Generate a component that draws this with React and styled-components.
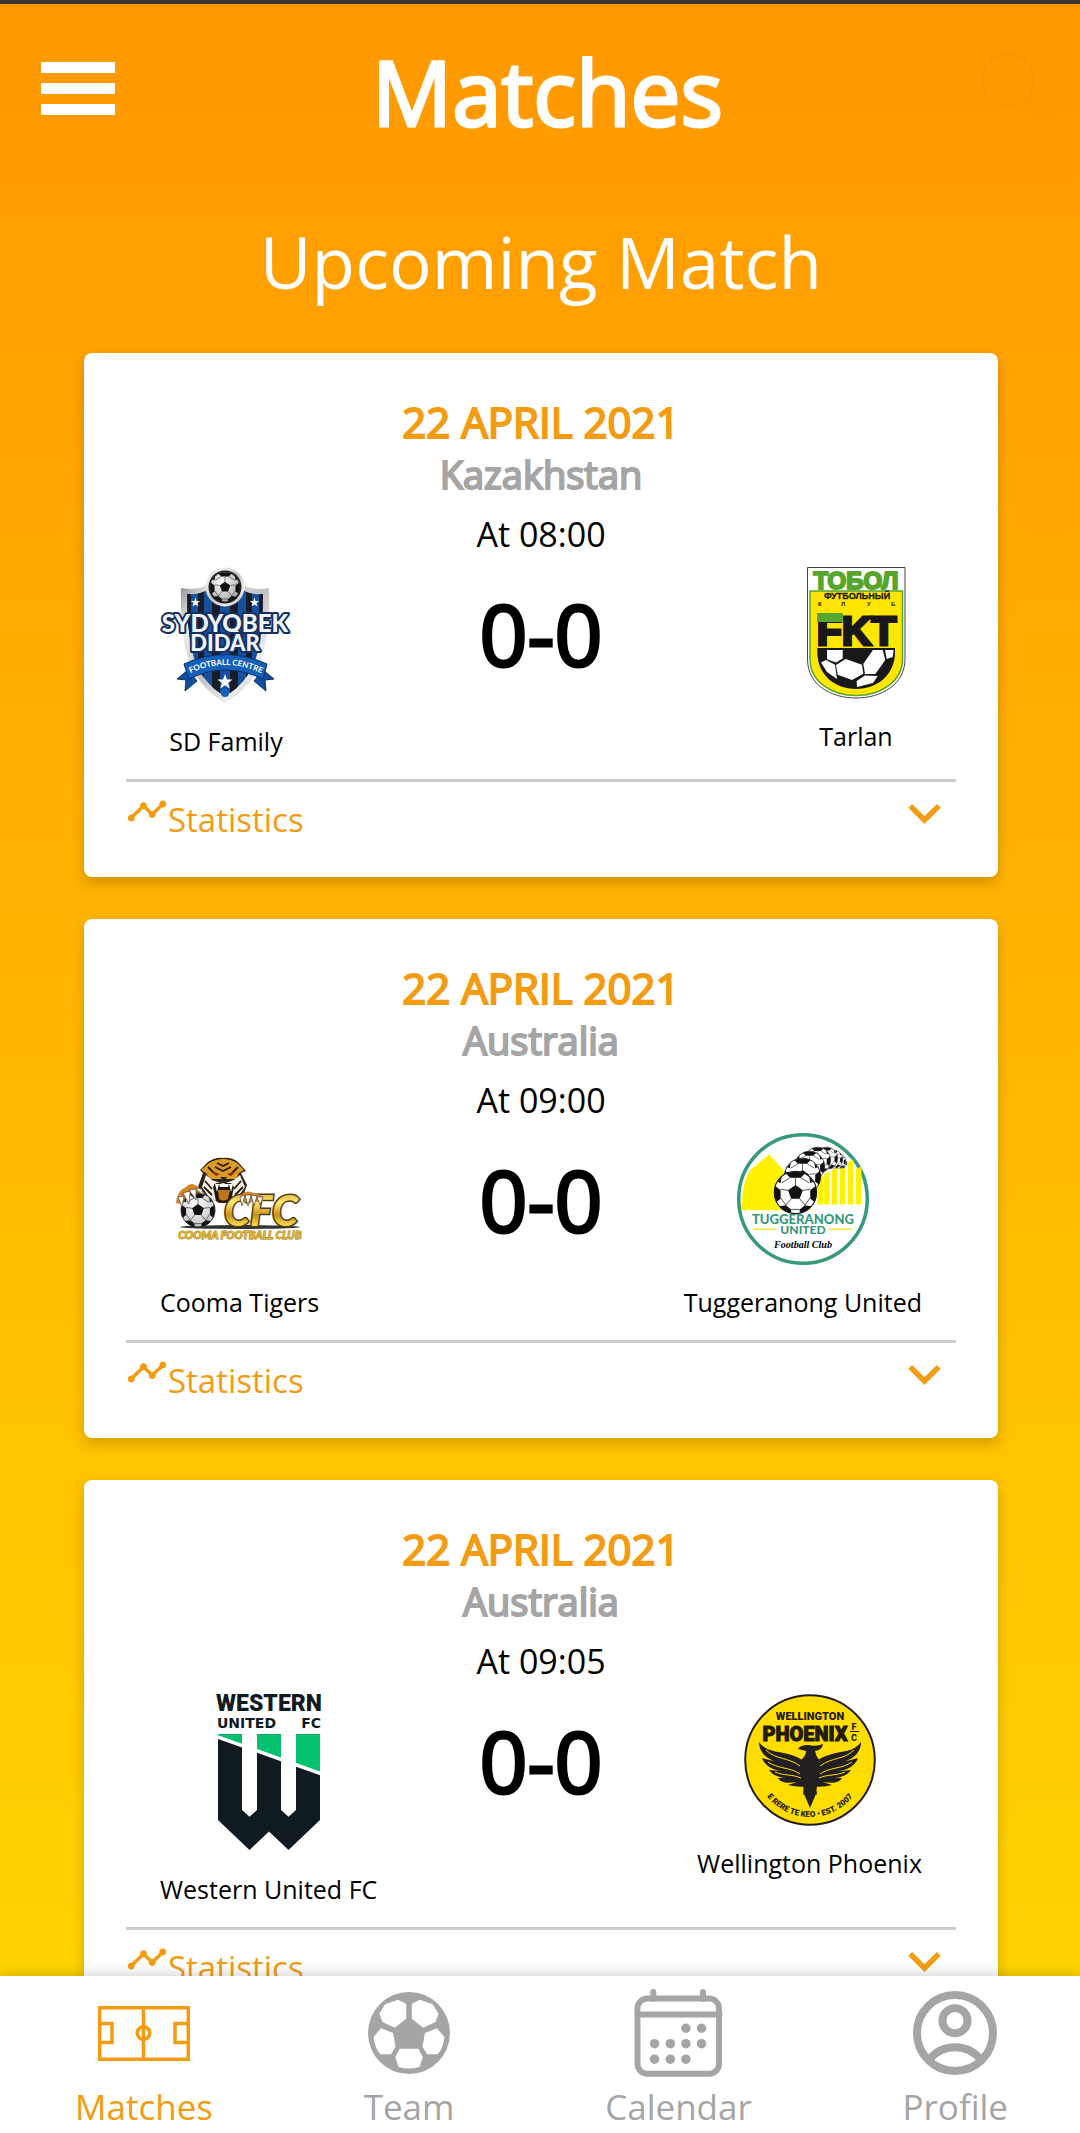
import React from "react";
import styled, { createGlobalStyle } from "styled-components";

const ORANGE = "#f39c12";
const GREY = "#a5a5a5";

const GlobalStyle = createGlobalStyle`
  * { box-sizing: border-box; }
  body { margin: 0; font-family: "Open Sans", "Noto Sans", sans-serif; color: #000; }
  h1, h2, h3, p { margin: 0; font-weight: 400; }
  svg { display: block; flex: none; overflow: visible; }
`;

const Screen = styled.div`
  display: flex;
  flex-direction: column;
  height: 100vh;
  background: linear-gradient(#ff9800, #ffd800);
  border-top: 4px solid #383431;
`;

const Scroll = styled.main`
  flex: 1;
  min-height: 0;
  overflow-y: auto;
  scrollbar-width: none;
`;

const Header = styled.header`
  display: flex;
  justify-content: space-between;
  align-items: flex-start;
  padding: 28px 26px 0 41px;
`;

const IconButton = styled.button`
  border: 0;
  padding: 0;
  background: none;
  cursor: pointer;
  margin-top: ${(p) => p.$top}px;
`;

const Title = styled.h1`
  font-size: 89px;
  line-height: 120px;
  color: #fff;
  -webkit-text-stroke: 3px #fff;
`;

const Content = styled.div`
  padding: 61px 82px 42px 84px;
  display: flex;
  flex-direction: column;
  gap: 42px;
`;

const SectionTitle = styled.h2`
  font-size: 71px;
  line-height: 98px;
  color: #fff;
  text-align: center;
`;

const Card = styled.article`
  background: #fff;
  border-radius: 8px;
  padding: 42px 42px 28px;
  box-shadow: 0 6px 14px rgba(0, 0, 0, 0.18);
`;

const MatchDate = styled.h3`
  font-size: 42px;
  line-height: 54px;
  text-align: center;
  color: ${ORANGE};
  -webkit-text-stroke: 2px ${ORANGE};
`;

const Country = styled.p`
  font-size: 38px;
  line-height: 50px;
  text-align: center;
  color: ${GREY};
  -webkit-text-stroke: 2px ${GREY};
`;

const Kickoff = styled.p`
  padding-top: 2px;
  font-size: 34px;
  line-height: 66px;
  text-align: center;
`;

const Teams = styled.div`
  display: grid;
  grid-template-columns: 1fr auto 1fr;
  align-items: start;
  padding: 0 34px 21px;
  border-bottom: 3px solid #cbcbcb;
`;

const Team = styled.div`
  justify-self: ${(p) => p.$side};
  display: flex;
  flex-direction: column;
  align-items: center;
  gap: 20px;
`;

const TeamName = styled.span`
  font-size: 25px;
  line-height: 34px;
  white-space: nowrap;
`;

const Score = styled.p`
  font-size: 84px;
  line-height: 134px;
  -webkit-text-stroke: 3px #000;
`;

const StatsButton = styled.button`
  display: flex;
  align-items: flex-start;
  width: 100%;
  border: 0;
  background: none;
  padding: 8px 15px 0 0;
  font: inherit;
  color: ${ORANGE};
  cursor: pointer;
`;

const StatsLabel = styled.span`
  flex: 1;
  text-align: left;
  font-size: 33px;
  line-height: 59px;
`;

const Chevron = styled.svg`
  margin-top: 14px;
`;

const TabBar = styled.nav`
  position: relative;
  display: flex;
  justify-content: space-between;
  background: #fff;
  padding: 13px 72px 2px 75px;
  box-shadow: 0 0 14px rgba(0, 0, 0, 0.22);
`;

const Tab = styled.a`
  display: flex;
  flex-direction: column;
  align-items: center;
  gap: 5px;
  font-size: 35px;
  line-height: 49px;
  text-decoration: none;
  color: ${(p) => (p.$active ? ORANGE : GREY)};
`;

const TabIcon = styled.span`
  display: flex;
  align-items: center;
  height: 88px;
`;

/* ---------- club crests ---------- */

const star = (cx, cy, r) =>
  Array.from({ length: 10 }, (_, i) => {
    const a = -Math.PI / 2 + (i * Math.PI) / 5;
    const d = i % 2 ? r * 0.4 : r;
    return `${cx + d * Math.cos(a)},${cy + d * Math.sin(a)}`;
  }).join(" ");

function Ball({ x, y, r, fill = "#fff" }) {
  return (
    <g transform={`translate(${x} ${y}) scale(${r / 20})`}>
      <circle r="20" fill={fill} stroke="#111" strokeWidth="1" />
      <path d="M0-7 7-2 4 6H-4L-7-2Z M-9-18Q0-21 9-18L5-14H-5Z M19-6Q21 2 18 9L14 6 14-2Z M-19-6Q-21 2-18 9L-14 6-14-2Z M4 19.500Q12 18 15 13L9 12 4 16Z M-4 19.500Q-12 18-15 13L-9 12-4 16Z M13-15 17-10 14-9Z M-13-15-17-10-14-9Z" fill="#111" />
      <path d="M0-7V-14M7-2 14-3M4 6 9 12M-4 6-9 12M-7-2-14-3M5-14 13-9M-5-14-13-9M14 5 9 12M-14 5-9 12M4 16H-4" stroke="#333" strokeWidth=".8" fill="none" />
    </g>
  );
}

function SydyqbekCrest() {
  return (
    <svg width="132" height="137" viewBox="0 0 132 137" role="img" aria-label="Sydyqbek Didar crest">
      <defs>
        <linearGradient id="sdSilver" x1="0" y1="0" x2="1" y2="1">
          <stop offset="0" stopColor="#8a8a8a" />
          <stop offset=".2" stopColor="#f1f1f1" />
          <stop offset=".5" stopColor="#c2c2c2" />
          <stop offset=".75" stopColor="#eee" />
          <stop offset="1" stopColor="#999" />
        </linearGradient>
        <radialGradient id="sdBall" cx=".4" cy=".35" r=".7">
          <stop offset="0" stopColor="#fff" />
          <stop offset="1" stopColor="#a5a5a5" />
        </radialGradient>
        <clipPath id="sdInner">
          <path d="M27 27Q42 28 48 22H82Q88 28 103 27Q103 60 98 84C93 104 82 120 65 129C48 120 37 104 32 84Q27 60 27 27Z" />
        </clipPath>
        <path id="sdArc" d="M29 107Q65 89 103 107" />
      </defs>
      <path d="M21 21Q38 24 48 17H82Q92 24 109 21Q110 60 104 84C98 108 84 125 65 136C46 125 32 108 26 84Q20 60 21 21Z" fill="url(#sdSilver)" />
      <g clipPath="url(#sdInner)">
        <rect x="20" y="15" width="92" height="120" fill="#17509f" />
        <path d="M38 15h6v120h-6zM52 15h8v120h-8zM70 15h8v120h-8zM86 15h6v120h-6zM99 15h6v120h-6zM27 15h4v120h-4z" fill="#171c26" />
      </g>
      <polygon points={star(35.500, 35.500, 5)} fill="#fff" />
      <polygon points={star(94.500, 35.500, 5)} fill="#fff" />
      <circle cx="65" cy="20" r="19.500" fill="url(#sdSilver)" />
      <circle cx="65" cy="20" r="16.500" fill="#222" />
      <Ball x={65} y={20} r={15} fill="url(#sdBall)" />
      <g fontFamily="Lato, sans-serif" fontWeight="900" textAnchor="middle" fill="#f2f5fb" stroke="#15305e" strokeWidth="4" strokeLinejoin="round" paintOrder="stroke">
        <text x="65" y="65" fontSize="24">SYDYQBEK</text>
        <text x="65" y="84" fontSize="22">DIDAR</text>
      </g>
      <path d="M28 103 17 112 26 113 25 124 37 114ZM103 103 114 112 105 113 106 124 94 114Z" fill="#0f4f9e" stroke="#0b2f63" />
      <path d="M24 97Q65 78 107 97L103 112Q65 94 29 112Z" fill="#1560bd" stroke="#0b2f63" />
      <text fontFamily="Lato, sans-serif" fontWeight="700" fontSize="8" fill="#fff">
        <textPath href="#sdArc" startOffset="50%" textAnchor="middle">FOOTBALL CENTRE</textPath>
      </text>
      <polygon points={star(65, 115, 8)} fill="#fff" />
      <circle cx="65" cy="126" r="4" fill="#1560bd" />
    </svg>
  );
}

function TobolCrest() {
  return (
    <svg width="132" height="132" viewBox="-17 0 132 132" role="img" aria-label="Tobol crest">
      <path d="M.5.5H98V92C98 118 74 131 49 131S.5 118 .5 92Z" fill="#fff" stroke="#444" />
      <path d="M3 24H95.500V92C95.500 115 73 128.500 49 128.500S3 115 3 92Z" fill="#ffe600" stroke="#56a52c" strokeWidth="1.500" />
      <g fontFamily="Liberation Sans, sans-serif" fontWeight="700" fill="#1a1718">
        <text x="49" y="22" fontSize="24" textAnchor="middle" fill="#56a52c" stroke="#56a52c" strokeWidth="2">ТОБОЛ</text>
        <text x="50" y="32" fontSize="9" textAnchor="middle" stroke="#1a1718" strokeWidth=".3">ФУТБОЛЬНЫЙ</text>
        <text x="11" y="39" fontSize="6">К</text>
        <text x="34" y="39" fontSize="6">Л</text>
        <text x="60" y="39" fontSize="6">У</text>
        <text x="84" y="39" fontSize="6">Б</text>
        <text x="49.500" y="78" fontSize="41" textAnchor="middle" stroke="#1a1718" strokeWidth="3">FKT</text>
      </g>
      <rect x="10" y="46" width="26" height="9" fill="#56a52c" />
      <path d="M10.300 81H88V85C88 108 70 122 49 122S10.300 108 10.300 85Z" fill="#1a1718" />
      <path d="M20 83H35.700V91.600L29 95.400 20 92.300ZM38.700 92 55 97.800 56.300 106.700 45 113 30.700 107.800 29 98ZM66 83H75.700L78.300 93 68.300 107H58L56.300 96.800ZM78 83H86.700L85.700 90 79.700 92ZM14 95.400 19 93 28 97.800 30 112 20 105ZM49.700 114 58 108.500 70.700 109 66 116 50 120Z" fill="#fff" />
    </svg>
  );
}

function CoomaCrest() {
  return (
    <svg width="132" height="132" viewBox="0 0 132 132" role="img" aria-label="Cooma Football Club crest">
      <defs>
        <linearGradient id="gold" x1="0" y1="0" x2="0" y2="1">
          <stop offset="0" stopColor="#b98a1c" />
          <stop offset=".35" stopColor="#ffe873" />
          <stop offset=".6" stopColor="#c6921c" />
          <stop offset=".8" stopColor="#f7d84c" />
          <stop offset="1" stopColor="#8a6412" />
        </linearGradient>
        <radialGradient id="cBall" cx=".45" cy=".35" r=".7">
          <stop offset="0" stopColor="#fff" />
          <stop offset="1" stopColor="#bbb" />
        </radialGradient>
      </defs>
      <ellipse cx="66" cy="94" rx="60" ry="2" fill="#333" />
      <path d="M26 37 34 29Q42 24 49 25Q57 24 64 29L72 38 67 40 73 52 68 66 56 70 45 70 32 62 24 54 29 40Z" fill="#2c2414" />
      <path d="M27 37 35 30Q42 26 49 26Q57 26 63 30L70 37 65 40 62 46H36L32 40Z" fill="#dc9a26" />
      <path d="M32 42 28 54 35 64 42 68 39 54 42 50H57L60 54 57 68 64 64 71 54 66 42 60 47 49 51 38 47Z" fill="#f6f2e8" />
      <path d="M43 30 49 33 55 30M41 34 49 38 57 34M34 34 40 40M64 34 58 40M31 48 38 56M67 48 60 56M30 54 38 62M69 54 61 62" fill="none" stroke="#2a1c0b" strokeWidth="1.800" />
      <path d="M37 38 46 41 42 43ZM62 38 53 41 57 43Z" fill="#8a2c12" />
      <path d="M46 44H53L50 48Z" fill="#222" />
      <path d="M40 51H59L57 66Q50 71 42 66Z" fill="#1c1208" />
      <path d="M44 57H56L54 66Q49 69 45 66Z" fill="#bd7817" />
      <path d="M41 51 43 59 45 51ZM55 51 57 59 59 51ZM45 51H55L54 54H46Z" fill="#fff" />
      <path d="M2 70Q3 58 12 54Q18 47 27 57L30 64 10 72Z" fill="#d78427" />
      <Ball x={24} y={77} r={17} fill="url(#cBall)" />
      <path d="M4 64 8 74 10 63ZM9 60 15 71 16 58ZM15 57 22 67 22 56ZM21 55 29 62 28 56Z" fill="#fff" stroke="#543" strokeWidth=".7" />
      <text x="87" y="93" fontFamily="Lato, sans-serif" fontWeight="900" fontStyle="italic" fontSize="42" textAnchor="middle" fill="url(#gold)" stroke="#4d3b12" strokeWidth="3" paintOrder="stroke">CFC</text>
      <path d="M66 64Q70 57 77 59L89 63V69H68Z" fill="#d78427" />
      <path d="M66 64 68 73 71 62ZM71 62 74 73 77 62ZM77 62 80 73 83 63ZM83 64 86 72 89 64Z" fill="#fff" stroke="#543" strokeWidth=".7" />
      <text x="66" y="106" fontFamily="Lato, sans-serif" fontWeight="900" fontStyle="italic" fontSize="11" textAnchor="middle" fill="#e0b52c" stroke="#8f7020" strokeWidth=".8" paintOrder="stroke">COOMA FOOTBALL CLUB</text>
    </svg>
  );
}

function TuggeranongCrest() {
  const bars = [[80, 45], [86.500, 41], [94, 37], [102, 33], [110, 29], [118, 36]];
  const balls = [[104, 30, 5], [101, 28, 7], [96, 26, 9], [89, 25, 11], [80, 27, 13], [72, 33, 15], [65, 43, 18], [58, 59, 21]];
  return (
    <svg width="132" height="132" viewBox="0 0 131 131" role="img" aria-label="Tuggeranong United crest">
      <circle cx="65.500" cy="65.500" r="63.800" fill="#fff" stroke="#36997c" strokeWidth="3.500" />
      <path d="M5 76.700Q4 50 13 37L32 21 47 38V70L77 76.700Z" fill="#fff200" />
      {bars.map(([x, y]) => (
        <path key={x} d={`M${x} ${y}l5.500-3V71h-5.500Z`} fill="#fff200" />
      ))}
      {balls.map(([x, y, r]) => (
        <Ball key={x} x={x} y={y} r={r} />
      ))}
      <g fontFamily="Lato, sans-serif" fontWeight="900" textAnchor="middle" fill="#36997c">
        <text x="65.500" y="90" fontSize="13">TUGGERANONG</text>
        <text x="65.500" y="100" fontSize="12">UNITED</text>
      </g>
      <path d="M17 95.500H39M91 95.500H114" stroke="#f5e62e" strokeWidth="1.500" />
      <text x="65.500" y="114" fontFamily="Liberation Serif, serif" fontStyle="italic" fontWeight="700" fontSize="10" textAnchor="middle">Football Club</text>
    </svg>
  );
}

function WesternCrest() {
  return (
    <svg width="132" height="158" viewBox="-15 0 132 158" role="img" aria-label="Western United crest">
      <defs>
        <clipPath id="westernMark">
          <path d="M0 40.300H24V116L31.500 122.700 39 116V40.300H63V116L70.500 122.700 78 116V40.300H102V126L70.500 156 51 137.500 31.500 156 0 126Z" />
        </clipPath>
      </defs>
      <g fill="#101a21" fontWeight="900">
        <text x="51" y="17" fontFamily="Roboto, sans-serif" fontSize="23" textAnchor="middle">WESTERN</text>
        <text x="-1" y="34" fontFamily="DejaVu Sans, sans-serif" fontSize="14">UNITED</text>
        <text x="103" y="34" fontFamily="DejaVu Sans, sans-serif" fontSize="14" textAnchor="end">FC</text>
      </g>
      <g clipPath="url(#westernMark)">
        <rect y="40" width="102" height="116" fill="#101a21" />
        <path d="M0 40H102V79L0 43Z" fill="#03c16e" />
        <path d="M-3 42 105 80.500" stroke="#fff" strokeWidth="3.500" />
      </g>
    </svg>
  );
}

function WellingtonCrest() {
  const wing = "M15 48C22 58 34 57 44 60Q56 63 60 68L66 74V92Q54 94 44 91L53 88C42 90 36 88 34 84L50 84C38 85 29 82 25 76L47 78C32 78 21 73 18 64L44 71C28 68 15 62 15 48Z";
  return (
    <svg width="132" height="132" viewBox="0 0 132 132" role="img" aria-label="Wellington Phoenix crest">
      <defs>
        <path id="phoenixArc" d="M22 101A55 55 0 0 0 110 101" />
      </defs>
      <circle cx="66" cy="66" r="64.800" fill="#fd0" stroke="#231f20" strokeWidth="2" />
      <g fontFamily="Roboto, sans-serif" fontWeight="900" textAnchor="middle" fill="#231a10">
        <text x="66" y="26" fontSize="11">WELLINGTON</text>
        <text x="61" y="47" fontSize="20" stroke="#231a10" strokeWidth="1">PHOENIX</text>
        <text x="110" y="36" fontSize="9">F</text>
        <text x="110" y="47" fontSize="9">C</text>
      </g>
      <path d="M106 37.500H115" stroke="#231a10" />
      <g fill="#231f20">
        <path d={wing} />
        <path d={wing} transform="translate(132 0) scale(-1 1)" />
        <path d="M54 55Q56 51 64 51Q72 53 79 50Q78 56 71 57Q72 62 75 66L76 86Q72 92 72 100L66 114 60 100Q60 92 56 86L57 66Q62 62 62 57Z" />
        <path d="M60 92 59 101 63 98ZM72 92 73 101 69 98Z" />
      </g>
      <path d="M22 56C32 66 44 63 56 72M24 68C34 75 46 73 56 80M31 78C40 82 48 80 57 84M110 56C100 66 88 63 76 72M108 68C98 75 86 73 76 80M101 78C92 82 84 80 75 84" fill="none" stroke="#fd0" strokeWidth="1" />
      <text fontFamily="Roboto, sans-serif" fontWeight="900" fontSize="8" fill="#231a10">
        <textPath href="#phoenixArc" startOffset="50%" textAnchor="middle">E RERE TE KEO • EST. 2007</textPath>
      </text>
    </svg>
  );
}

/* ---------- tab icons ---------- */

const PitchIcon = () => (
  <svg width="92" height="55" viewBox="0 0 92 55" fill="none" stroke={ORANGE} strokeWidth="3.500" aria-hidden="true">
    <path d="M1.750 1.750H90.250V53.250H1.750ZM45.500 2V53M2 17.500H14V36.500H2M90 17.500H77V36.500H90" />
    <circle cx="45.500" cy="27" r="6.300" />
  </svg>
);

const BallIcon = () => (
  <svg width="82" height="82" viewBox="0 0 82 82" aria-hidden="true">
    <circle cx="41" cy="41" r="41" fill={GREY} />
    <path fill="#fff" strokeLinejoin="round" d="M30 7.700 38.200 11.700V26.700L26.900 35.700 14.500 30 11.400 21.700 17.200 12.300ZM52 7.700 43.800 11.700V26.700L55.100 35.700 67.500 30 70.600 21.700 64.800 12.300ZM13.100 36.300 25.100 41 27.500 54.700 23 62.300H12.400Q7 57 5.500 45ZM68.900 36.300 56.900 41 54.500 54.700 59 62.300H69.600Q75 57 76.500 45ZM31.700 56.700H50.300L54.700 65.300 51.500 75Q41 78 30.500 75L27.300 65.300Z" />
  </svg>
);

const CalendarIcon = () => (
  <svg width="89" height="88" viewBox="0 0 89 89" aria-hidden="true">
    <rect x="3" y="9.700" width="82.500" height="76" rx="10" fill="none" stroke={GREY} strokeWidth="6" />
    <path d="M3 25.700H86M19 3V10M69.300 3V10" stroke={GREY} strokeWidth="6" strokeLinecap="round" />
    {[[52, 39.700], [67.800, 39.700], [20.300, 55.300], [36.200, 55.300], [52, 55.300], [67.800, 55.300], [20.300, 71], [36.200, 71], [52, 71]].map(([x, y]) => (
      <circle key={`${x}-${y}`} cx={x} cy={y} r="4.800" fill={GREY} />
    ))}
  </svg>
);

const ProfileIcon = () => (
  <svg width="84" height="84" viewBox="0 0 84.400 84.400" fill="none" stroke={GREY} strokeWidth="8" aria-hidden="true">
    <circle cx="42.200" cy="42.200" r="38.200" />
    <circle cx="42.200" cy="29.800" r="12.600" />
    <path d="M16 69.500A33 33 0 0 1 68.400 69.500" />
  </svg>
);

/* ---------- data and page ---------- */

const matches = [
  { date: "22 APRIL 2021", country: "Kazakhstan", time: "08:00", score: "0-0", home: "SD Family", away: "Tarlan", HomeCrest: SydyqbekCrest, AwayCrest: TobolCrest },
  { date: "22 APRIL 2021", country: "Australia", time: "09:00", score: "0-0", home: "Cooma Tigers", away: "Tuggeranong United", HomeCrest: CoomaCrest, AwayCrest: TuggeranongCrest },
  { date: "22 APRIL 2021", country: "Australia", time: "09:05", score: "0-0", home: "Western United FC", away: "Wellington Phoenix", HomeCrest: WesternCrest, AwayCrest: WellingtonCrest },
];

const tabs = [
  { label: "Matches", Icon: PitchIcon, active: true },
  { label: "Team", Icon: BallIcon },
  { label: "Calendar", Icon: CalendarIcon },
  { label: "Profile", Icon: ProfileIcon },
];

function MatchCard({ match }) {
  const { HomeCrest, AwayCrest } = match;
  return (
    <Card>
      <MatchDate>{match.date}</MatchDate>
      <Country>{match.country}</Country>
      <Kickoff>At {match.time}</Kickoff>
      <Teams>
        <Team $side="start">
          <HomeCrest />
          <TeamName>{match.home}</TeamName>
        </Team>
        <Score>{match.score}</Score>
        <Team $side="end">
          <AwayCrest />
          <TeamName>{match.away}</TeamName>
        </Team>
      </Teams>
      <StatsButton type="button" aria-expanded="false">
        <svg width="42" height="42" viewBox="0 0 24 24" fill={ORANGE} aria-hidden="true">
          <path d="M23 8c0 1.100-.9 2-2 2-.18 0-.35-.02-.51-.07l-3.560 3.550c.05.16.07.34.07.52 0 1.100-.9 2-2 2s-2-.9-2-2c0-.18.02-.36.07-.52l-2.550-2.550c-.16.05-.34.07-.52.07s-.36-.02-.52-.07l-4.550 4.560c.05.16.07.33.07.51 0 1.100-.9 2-2 2s-2-.9-2-2 .9-2 2-2c.18 0 .35.02.51.07l4.560-4.550C8.020 9.360 8 9.180 8 9c0-1.100.9-2 2-2s2 .9 2 2c0 .18-.02.36-.07.52l2.550 2.550c.16-.05.34-.07.52-.07s.36.02.52.07l3.550-3.560C19.020 8.350 19 8.180 19 8c0-1.100.9-2 2-2s2 .9 2 2z" />
        </svg>
        <StatsLabel>Statistics</StatsLabel>
        <Chevron width="33" height="20" viewBox="6 7.840 12 7.410" fill={ORANGE} aria-hidden="true">
          <path d="M7.410 7.840 12 12.420l4.590-4.580L18 9.250l-6 6-6-6z" />
        </Chevron>
      </StatsButton>
    </Card>
  );
}

export default function App() {
  return (
    <Screen>
      <GlobalStyle />
      <Scroll>
        <Header>
          <IconButton type="button" aria-label="Menu" $top={30}>
            <svg width="74" height="53" viewBox="0 0 74 53" fill="#fff">
              <path d="M0 0H74V11H0ZM0 21H74V32H0ZM0 42H74V53H0Z" />
            </svg>
          </IconButton>
          <Title>Matches</Title>
          <IconButton type="button" aria-label="Search" $top={18}>
            <svg width="74" height="74" viewBox="0 0 74 74" fill="none" stroke="#e67e00" strokeOpacity=".1" strokeWidth="4">
              <circle cx="28" cy="30" r="26" />
              <path d="M47 49 68 70" strokeWidth="7" />
            </svg>
          </IconButton>
        </Header>
        <Content>
          <SectionTitle>Upcoming Match</SectionTitle>
          {matches.map((match) => (
            <MatchCard key={match.home} match={match} />
          ))}
        </Content>
      </Scroll>
      <TabBar>
        {tabs.map(({ label, Icon, active }) => (
          <Tab key={label} href={`#${label.toLowerCase()}`} $active={active} aria-current={active ? "page" : undefined}>
            <TabIcon>
              <Icon />
            </TabIcon>
            {label}
          </Tab>
        ))}
      </TabBar>
    </Screen>
  );
}
